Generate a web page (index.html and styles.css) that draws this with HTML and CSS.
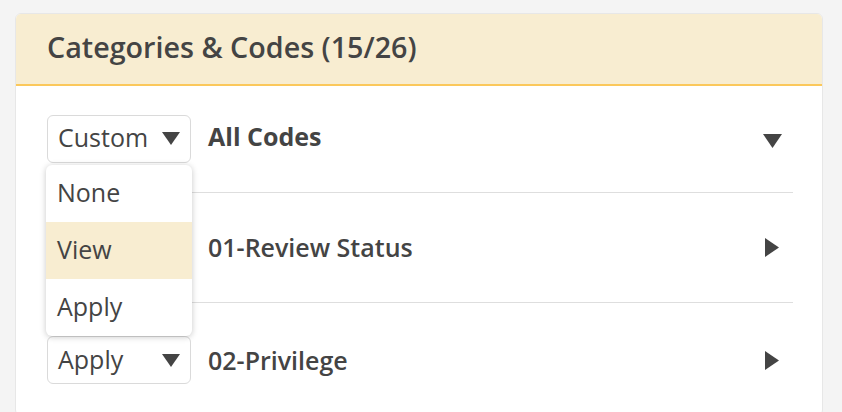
FILE: index.html
```html
<!DOCTYPE html>
<html>
<head>
<meta charset="utf-8">
<link rel="stylesheet" href="styles.css">
</head>
<body>
<div class="card">
  <div class="card-header">
    <h2 class="card-title">Categories &amp; Codes (15/26)</h2>
  </div>
  <div class="card-body">
    <div class="row row-first">
      <div class="select-wrap">
        <div class="select">
          <span class="select-value">Custom</span>
          <svg class="select-arrow" width="18" height="13" viewBox="0 0 18 13"><path d="M0 0H18L9 13Z" fill="#444"/></svg>
        </div>
        <ul class="menu">
          <li class="menu-item">None</li>
          <li class="menu-item is-active">View</li>
          <li class="menu-item">Apply</li>
        </ul>
      </div>
      <span class="row-label label-bold">All Codes</span>
      <span class="caret caret-down"><svg width="19" height="14" viewBox="0 0 19 14"><path d="M0 0H19L9.5 14Z" fill="#444"/></svg></span>
    </div>
    <div class="row">
      <div class="select-wrap">
        <div class="select">
          <span class="select-value">View</span>
          <svg class="select-arrow" width="18" height="13" viewBox="0 0 18 13"><path d="M0 0H18L9 13Z" fill="#444"/></svg>
        </div>
      </div>
      <span class="row-label">01-Review Status</span>
      <span class="caret"><svg width="14" height="19" viewBox="0 0 14 19"><path d="M0 0V19L14 9.5Z" fill="#444"/></svg></span>
    </div>
    <div class="row row-last">
      <div class="select-wrap">
        <div class="select">
          <span class="select-value">Apply</span>
          <svg class="select-arrow" width="18" height="13" viewBox="0 0 18 13"><path d="M0 0H18L9 13Z" fill="#444"/></svg>
        </div>
      </div>
      <span class="row-label">02-Privilege</span>
      <span class="caret"><svg width="14" height="19" viewBox="0 0 14 19"><path d="M0 0V19L14 9.5Z" fill="#444"/></svg></span>
    </div>
  </div>
</div>
</body>
</html>
```

FILE: styles.css
```css
* { box-sizing: border-box; }
html, body {
  margin: 0;
  padding: 0;
  background: #f4f4f4;
  font-family: "Open Sans", "Liberation Sans", sans-serif;
  color: #444;
}
body { padding: 13px 19px 0 15px; }
.card {
  width: 808px;
  background: #fff;
  border: 1px solid #e7e7e7;
  border-radius: 6px;
}
.card-header {
  height: 72px;
  display: flex;
  align-items: center;
  padding-left: 31px;
  background: #f8edd1;
  border-bottom: 2px solid #fbc85b;
  border-radius: 5px 5px 0 0;
}
.card-title {
  margin: 0 0 3px 0;
  font-size: 28.7px;
  font-weight: 600;
  line-height: 1;
}
.card-body {
  padding: 0 29px 0 31px;
}
.row {
  display: flex;
  align-items: center;
  padding: 30px 0 31px 0;
  border-bottom: 1px solid #dedede;
}
.row-first { padding: 29px 0 29px 0; }
.row-last { border-bottom: none; padding-top: 33px; }
.select-wrap {
  position: relative;
  flex: none;
}
.select {
  width: 144px;
  height: 48px;
  display: flex;
  align-items: center;
  justify-content: space-between;
  padding: 0 10px 3px 10px;
  border: 1px solid #dadada;
  border-radius: 6px;
  background: #fff;
  font-size: 25px;
}
.row-first .select { padding-bottom: 5px; }
.select-arrow { display: block; margin-top: 3px; }
.menu {
  position: absolute;
  top: 50px;
  left: -1px;
  width: 146px;
  margin: 0;
  padding: 0;
  list-style: none;
  background: #fff;
  border-radius: 6px;
  box-shadow: 0 1px 6px rgba(0, 0, 0, 0.22);
  overflow: hidden;
  z-index: 5;
}
.menu-item {
  height: 57px;
  display: flex;
  align-items: center;
  padding: 0 0 3px 11px;
  font-size: 25px;
}
.menu-item.is-active { background: #f8edd1; }
.row-label {
  margin-left: 17px;
  font-size: 25px;
  font-weight: 600;
}
.row-first .row-label { margin-bottom: 6px; }
.label-bold { font-weight: 700; }
.caret {
  margin-left: auto;
  margin-right: 9px;
  width: 24px;
  display: flex;
  justify-content: center;
}
.caret-down { margin-top: 4px; }
.caret svg { display: block; }
```
